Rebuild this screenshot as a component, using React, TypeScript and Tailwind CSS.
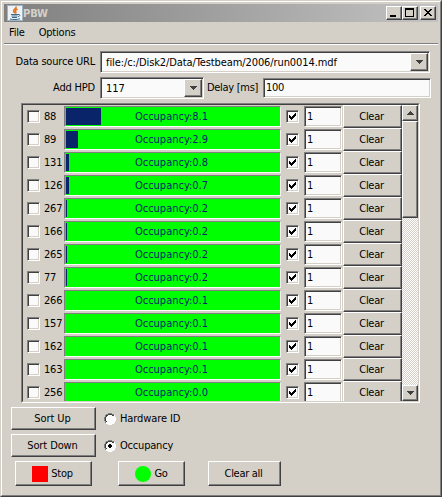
import clsx from 'clsx';
import type { ReactNode } from 'react';

const rows = [
    { id: 88, value: '8.1', fill: 35 },
    { id: 89, value: '2.9', fill: 12 },
    { id: 131, value: '0.8', fill: 3 },
    { id: 126, value: '0.7', fill: 3 },
    { id: 267, value: '0.2', fill: 1 },
    { id: 166, value: '0.2', fill: 1 },
    { id: 265, value: '0.2', fill: 1 },
    { id: 77, value: '0.2', fill: 1 },
    { id: 266, value: '0.1', fill: 0 },
    { id: 157, value: '0.1', fill: 0 },
    { id: 162, value: '0.1', fill: 0 },
    { id: 163, value: '0.1', fill: 0 },
    { id: 256, value: '0.0', fill: 0 },
];

// Classic two-pixel bevels
const raised =
    'bg-[#d4d0c8] border border-t-white border-l-white border-r-[#404040] border-b-[#404040] shadow-[inset_-1px_-1px_0_#808080]';
const sunken =
    'bg-[#fafafa] border border-t-[#808080] border-l-[#808080] border-r-white border-b-white shadow-[inset_1px_1px_0_#404040,inset_-1px_-1px_0_#d4d0c8]';

const Button = ({ className, children }: { className?: string; children: ReactNode }) => (
    <button className={clsx('flex shrink-0 items-center justify-center whitespace-nowrap', raised, className)}>
        {children}
    </button>
);

const Arrow = ({ up = false }: { up?: boolean }) => (
    <svg width="7" height="4" viewBox="0 0 7 4" shapeRendering="crispEdges" className={clsx(up && 'rotate-180')}>
        <path d="M0 0h7v1H0zM1 1h5v1H1zM2 2h3v1H2zM3 3h1v1H3z" fill="#404040" />
    </svg>
);

const Combo = ({ value, className }: { value: string; className: string }) => (
    <div className={clsx('flex h-[22px] shrink-0 p-px', sunken, className)}>
        <span className="flex-1 whitespace-nowrap pl-1 leading-[19px]">{value}</span>
        <Button className="h-[18px] w-[18px]">
            <Arrow />
        </Button>
    </div>
);

const Checkbox = ({ checked = false }: { checked?: boolean }) => (
    <div className={clsx('flex h-[13px] w-[13px] shrink-0 items-center justify-center', sunken)}>
        {checked && (
            <svg width="7" height="7" viewBox="0 0 7 7" shapeRendering="crispEdges">
                <path d="M0 2h1v1h1v1h1V3h1V2h1V1h1V0h1v3H6v1H5v1H4v1H3v1H2V6H1V5H0z" fill="#000" />
            </svg>
        )}
    </div>
);

const Radio = ({ checked = false }: { checked?: boolean }) => (
    <svg width="12" height="12" viewBox="0 0 12 12" shapeRendering="crispEdges" className="shrink-0">
        <path d="M4 1h4v1h2v2h1v4h-1v2H8v1H4v-1H2V8H1V4h1V2h2z" fill="#fafafa" />
        <path d="M4 0h4v1H4zM2 1h2v1H2zM8 1h2v1H8zM1 2h1v2H1zM0 4h1v4H0zM1 8h1v2H1z" fill="#808080" />
        <path d="M4 1h4v1H4zM2 2h2v1H2zM8 2h2v1H8zM2 3h1v1H2zM1 4h1v4H1zM2 8h1v1H2z" fill="#404040" />
        <path d="M10 2h1v2h-1zM11 4h1v4h-1zM10 8h1v2h-1zM8 10h2v1H8zM4 11h4v1H4zM2 10h2v1H2z" fill="#fff" />
        {checked && <path d="M5 4h2v1h1v2H7v1H5V7H4V5h1z" fill="#000" />}
    </svg>
);

const JavaIcon = () => (
    <svg width="16" height="16" viewBox="0 0 16 16">
        <rect x=".5" y=".5" width="15" height="15" fill="#eef2f5" stroke="#9db4c4" />
        <path d="M9 1.5c.9 2-3 3-2.4 4.8.2.7.9 1.3 1.2 2M10.5 4C8.5 5 8 5.7 8.800 7c.3.6 0 1-.5 1.4" fill="none" stroke="#e8731a" strokeWidth="1.6" />
        <path d="M4 9.5h7M4.5 11h6M5 12.5h5M11 9.5c2.4-.4 2.4 1.7 0 2.2M3 14c3 .8 7 .8 10-.3" fill="none" stroke="#3b6a8f" />
    </svg>
);

const TitleBar = () => (
    <div className="flex h-[18px] shrink-0 items-center bg-linear-to-r from-[#808080] to-[#c3c3c3] pl-[3px] pr-[2px]">
        <JavaIcon />
        <span className="flex-1 pt-[2px] font-bold text-[#d4d0c8]">PBW</span>
        <Button className="h-[14px] w-[16px]">
            <svg width="12" height="10" viewBox="0 0 12 10" shapeRendering="crispEdges">
                <path d="M2 7h6v2H2z" />
            </svg>
        </Button>
        <Button className="mr-[2px] h-[14px] w-[16px]">
            <svg width="12" height="10" viewBox="0 0 12 10" shapeRendering="crispEdges">
                <path d="M1 0h9v9H1zM2 2v6h7V2z" fillRule="evenodd" />
            </svg>
        </Button>
        <Button className="h-[14px] w-[16px]">
            <svg width="12" height="10" viewBox="0 0 12 10" shapeRendering="crispEdges">
                <path d="M2 1h2v1h1v1h2V2h1V1h2v1H9v1H8v1H7v1h1v1h1v1h1v1H8V7H7V6H5v1H4v1H2V7h1V6h1V5h1V4H4V3H3V2H2z" />
            </svg>
        </Button>
    </div>
);

const HpdRow = ({ id, value, fill }: { id: number; value: string; fill: number }) => (
    <div className="flex h-[23px] shrink-0 items-center pl-1">
        <Checkbox />
        <span className="w-6 shrink-0 pl-1 pt-px tracking-[-0.2px]">{id}</span>
        <div className="grid h-[21px] w-[217px] shrink-0 border border-t-[#808080] border-l-[#808080] border-r-white border-b-white bg-[#00ff00] p-px">
            <div className="col-start-1 row-start-1 bg-[#0a246a]" style={{ width: fill }} />
            <span className="col-start-1 row-start-1 pr-[2px] text-center leading-[17px] tracking-normal text-[#0a246a]">
                Occupancy:{value}
            </span>
        </div>
        <div className="ml-[5px]">
            <Checkbox checked />
        </div>
        <div className={clsx('ml-[5px] mr-px h-[21px] w-[38px] shrink-0 pl-[2px] leading-[19px]', sunken)}>1</div>
        <Button className="h-[23px] w-[59px] pr-[2px] pt-[2px] tracking-[-0.3px]">Clear</Button>
    </div>
);

const ScrollBar = () => (
    <div className="flex w-4 shrink-0 flex-col bg-[repeating-conic-gradient(#fff_0_25%,#d4d0c8_0_50%)] bg-size-[2px_2px]">
        <Button className="h-4 w-4">
            <Arrow up />
        </Button>
        <div className={clsx('h-[97px] w-4', raised)} />
        <Button className="mt-auto h-4 w-4">
            <Arrow />
        </Button>
    </div>
);

export default function App() {
    return (
        <div className="h-[497px] w-[442px] overflow-hidden border border-t-[#d4d0c8] border-l-[#d4d0c8] border-r-[#404040] border-b-[#404040] bg-[#d4d0c8] font-['DejaVu_Sans_Condensed','DejaVu_Sans',sans-serif] text-[11px] tracking-[-0.1px] text-black">
            <div className="flex h-full flex-col border border-t-white border-l-white border-r-[#808080] border-b-[#808080] p-[2px]">
                <TitleBar />
                <div className="flex h-[22px] shrink-0 items-center gap-[14px] border-b border-[#808080] pl-[5px] pt-px tracking-[-0.2px] shadow-[0_1px_0_#fff]">
                    <span>File</span>
                    <span>Options</span>
                </div>

                <div className="mt-[7px] flex items-center">
                    <span className="w-24 shrink-0 pr-[5px] pt-px text-right tracking-[-0.2px]">Data source URL</span>
                    <Combo value="file:/c:/Disk2/Data/Testbeam/2006/run0014.mdf" className="w-[330px]" />
                </div>
                <div className="mt-1 flex items-center">
                    <span className="w-24 shrink-0 pr-[5px] pt-px text-right tracking-[-0.2px]">Add HPD</span>
                    <Combo value="117" className="w-[104px]" />
                    <span className="w-[59px] shrink-0 whitespace-nowrap pl-[3px] pt-px tracking-[-0.3px]">Delay [ms]</span>
                    <div className={clsx('h-5 w-[168px] pl-[2px] leading-[18px] tracking-[-0.3px]', sunken)}>100</div>
                </div>

                <div className="ml-[17px] mt-1 flex h-[300px] w-[399px] shrink-0 border border-t-[#808080] border-l-[#808080] border-r-white border-b-white">
                    <div className="flex flex-1 overflow-hidden border border-t-[#404040] border-l-[#404040] border-r-[#d4d0c8] border-b-[#d4d0c8]">
                        <div className="flex w-[379px] shrink-0 flex-col overflow-hidden">
                            {rows.map((row) => (
                                <HpdRow key={row.id} {...row} />
                            ))}
                        </div>
                        <ScrollBar />
                    </div>
                </div>

                <div className="ml-[7px] mt-1 flex flex-col gap-1">
                    <div className="flex items-center">
                        <Button className="mr-2 h-[23px] w-[85px] pr-[2px] pt-[2px]">Sort Up</Button>
                        <Radio />
                        <span className="ml-1 pt-px">Hardware ID</span>
                    </div>
                    <div className="flex items-center">
                        <Button className="mr-2 h-[23px] w-[85px] pr-[2px] pt-[2px]">Sort Down</Button>
                        <Radio checked />
                        <span className="ml-1 pt-px tracking-[-0.2px]">Occupancy</span>
                    </div>
                </div>
                <div className="ml-[11px] mt-1 flex tracking-[-0.3px]">
                    <Button className="h-[25px] w-[77px] gap-[3px] pr-[2px]">
                        <span className="h-4 w-4 bg-[#ff0000]" />
                        <span className="pt-px">Stop</span>
                    </Button>
                    <Button className="ml-[26px] h-[25px] w-[67px] gap-[3px]">
                        <span className="h-4 w-4 rounded-full bg-[#00ff00]" />
                        <span className="pt-px">Go</span>
                    </Button>
                    <Button className="ml-[23px] h-[25px] w-[73px] pr-[2px] pt-[2px]">Clear all</Button>
                </div>
            </div>
        </div>
    );
}
